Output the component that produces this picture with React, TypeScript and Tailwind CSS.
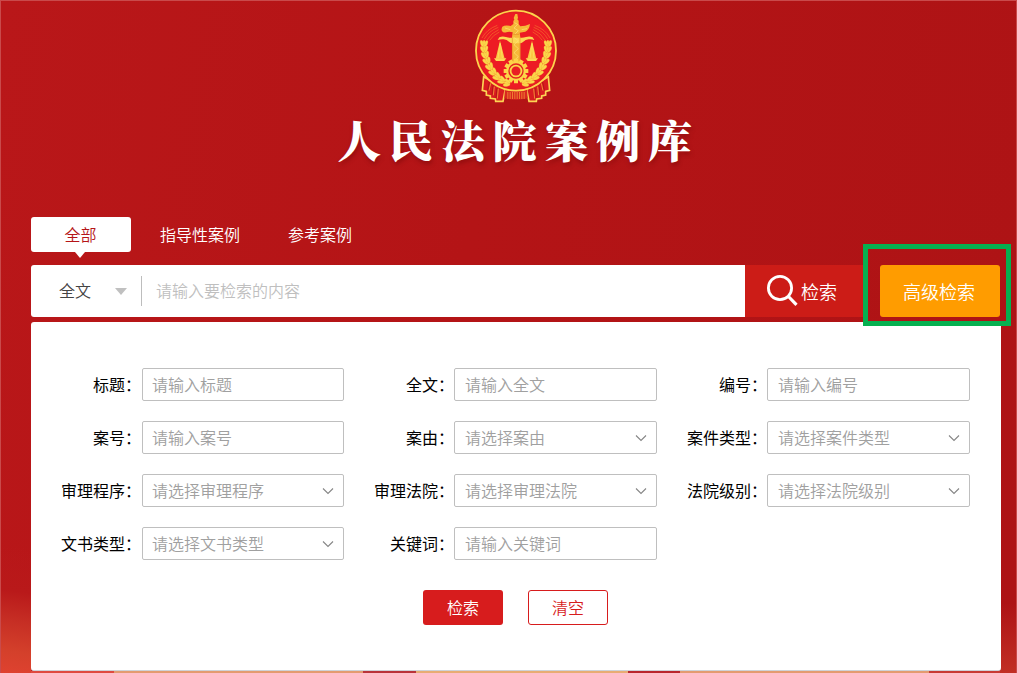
import clsx from 'clsx'

const tabs = ['全部', '指导性案例', '参考案例']

const fields = [
  { label: '标题', hint: '请输入标题' },
  { label: '全文', hint: '请输入全文' },
  { label: '编号', hint: '请输入编号' },
  { label: '案号', hint: '请输入案号' },
  { label: '案由', hint: '请选择案由', select: true },
  { label: '案件类型', hint: '请选择案件类型', select: true },
  { label: '审理程序', hint: '请选择审理程序', select: true },
  { label: '审理法院', hint: '请选择审理法院', select: true },
  { label: '法院级别', hint: '请选择法院级别', select: true },
  { label: '文书类型', hint: '请选择文书类型', select: true },
  { label: '关键词', hint: '请输入关键词' },
]

// Grain pairs along the left ear of wheat, bottom to top
const grains = [
  [126, 249, -76],
  [110, 241, -60],
  [96, 230, -50],
  [84, 216, -40],
  [74, 200, -30],
  [66, 183, -22],
  [61, 165, -14],
  [58, 148, -6],
  [57, 131, 2],
]

function Wheat() {
  return (
    <g fill="#fbd84c" stroke="#f2a52e" strokeWidth="0.8">
      {grains.map(([x, y, r]) => (
        <g key={y} transform={`translate(${x} ${y}) rotate(${r})`}>
          <ellipse cx="-5" cy="-2" rx="5" ry="10.5" transform="rotate(-22)" />
          <ellipse cx="5" cy="-2" rx="5" ry="10.5" transform="rotate(22)" />
          <ellipse cx="0" cy="-3" rx="3.5" ry="8" />
        </g>
      ))}
    </g>
  )
}

function Curtain() {
  return (
    <g>
      <path d="M56 230 L52 271 L64 274 L64 285 L76 288 L76 295 L91 297 L92 304 L114 304 L121 268 Z" fill="#d81c20" stroke="#fcd554" strokeWidth="5" />
      <path d="M73 246 L68 272 M84 256 L81 284 M96 264 L93 294" stroke="#a31114" strokeWidth="2" fill="none" />
      <path d="M77 250 L72 272 M88 260 L85 286 M100 266 L97 296" stroke="#f5a03a" strokeWidth="2.5" fill="none" />
    </g>
  )
}

function Emblem() {
  return (
    <svg className="h-[110px] w-[100px] shrink-0" viewBox="0 0 300 330">
      <Curtain />
      <g transform="translate(306 0) scale(-1 1)">
        <Curtain />
      </g>
      <path d="M120 262 H186 L188 295 Q153 303 118 295 Z" fill="#d9271f" />
      {[127, 134, 141, 148, 155, 162, 169, 176].map((x) => (
        <path key={x} d={`M${x + 1.5} 276 V297`} stroke="#f09035" strokeWidth="2.5" />
      ))}
      <circle cx="153" cy="152" r="120" fill="#ed1b24" stroke="#fcd44c" strokeWidth="5.5" />
      <circle cx="153" cy="152" r="114.5" fill="none" stroke="#d8221f" strokeWidth="2" />

      {/* Thin radiating arcs */}
      <g fill="none" stroke="#f5822b" strokeWidth="1.6">
        <path d="M51 114 Q65 88 97 76 M58 117 Q71 93 100 82 M66 120 Q78 99 101 89 M74 121 Q84 105 103 96" />
        <path d="M255 114 Q241 88 209 76 M248 117 Q235 93 206 82 M240 120 Q228 99 205 89 M232 121 Q222 105 203 96" />
      </g>

      <Wheat />
      <g transform="translate(306 0) scale(-1 1)">
        <Wheat />
      </g>

      {/* Huabiao column */}
      <path d="M151 42 L157 42 L159 54 L157 58 L161 62 V72 L166 79 Q181 79 195 72 Q193 89 181 95 L164 98 L166 112 V192 H141 V112 L143 97 Q132 94 124 97 Q114 99 111 93 Q108 88 112 80 Q120 74 137 78 L145 72 V63 L148 59 L146 54 Z" fill="#f6b838" />
      {/* Balance beam and pans */}
      <g fill="#fcd855">
        <path d="M103 112 Q112 107 123 111 Q132 114 141 113 H166 Q174 114 183 111 Q194 107 203 112 L208 120 Q199 117 191 118 Q181 119 175 125 Q171 129 166 130 H141 Q136 129 132 125 Q126 119 116 118 Q107 117 98 120 Z" />
        <path d="M105 122 L92 176 H119 Z M201 122 L187 176 H214 Z" fill="#fbc942" />
        <path d="M87 175 H124 L118 183 H93 Z M182 175 H219 L213 183 H188 Z" />
      </g>
      <path d="M105 130 L99 174 M106 130 L112 174 M201 130 L195 174 M201 130 L207 174" stroke="#fee46a" strokeWidth="2" />
      <path d="M146 112 L160 122 L147 134 L160 146 L147 158 L160 170 L147 182 M148 68 L158 73 L147 84 L160 92 L150 102 M120 84 L136 89 M170 89 L186 86" fill="none" stroke="#ffe27a" strokeWidth="2" />
      <path d="M142 113 V190 M165 113 V190 M145 103 H162" stroke="#dc7a23" strokeWidth="1.5" />

      {/* Gear */}
      <g fill="#fcd548">
        {[0, 30, 60, 90, 120, 150, 180, 210, 240, 270, 300, 330].map((a) => (
          <rect key={a} x="147" y="176" width="12" height="12" rx="1" transform={`rotate(${a} 153 213)`} />
        ))}
        <circle cx="153" cy="213" r="30" />
      </g>
      <circle cx="153" cy="213" r="21" fill="#fcd548" stroke="#e32320" strokeWidth="4" />
      <circle cx="153" cy="213" r="13.5" fill="#e91f24" />
    </svg>
  )
}

function Chevron() {
  return (
    <svg className="h-3 w-3" viewBox="0 0 12 12" fill="none" stroke="#858585" strokeWidth="1.1">
      <path d="M1 3.5 L6 8.5 L11 3.5" />
    </svg>
  )
}

export default function App() {
  return (
    <div className="relative flex h-[673px] w-[1017px] flex-col overflow-hidden border border-b-0 border-[#c94a4b] bg-[linear-gradient(100deg,#b91719_0%,#b41416_45%,#ad1315_100%)] font-['Noto_Sans_CJK_SC',sans-serif] text-base font-[350]">
      {/* Warm glow in the lower corners */}
      <div className="absolute bottom-0 left-0 h-[125px] w-[30px] bg-[linear-gradient(8deg,#df4230_0%,#d4402b_18%,#c62e24_42%,#b9191a_65%,transparent_100%)]" />
      <div className="absolute right-0 bottom-0 h-[70px] w-4 bg-linear-to-t from-[#c12f25] to-transparent" />

      {/* Header */}
      <header className="relative -mt-px flex h-[217px] flex-col items-center pl-[13px]">
        <Emblem />
        <h1 className="-mt-[3px] pl-[7px] font-['Noto_Serif_CJK_SC','Noto_Sans_CJK_SC',serif] text-[44px] leading-[64px] font-black tracking-[7.8px] whitespace-nowrap text-white [text-shadow:1px_3px_4px_rgba(90,0,0,0.35)]">
          人民法院案例库
        </h1>
      </header>

      {/* Tabs */}
      <nav className="relative ml-[30px] flex h-12 items-start text-white">
        {tabs.map((tab, i) => (
          <div
            key={tab}
            className={clsx(
              'relative flex h-[35px] items-center justify-center pb-0.5',
              i === 0 && 'w-[100px] rounded-[3px] bg-white pr-px text-[#b51518]',
              i === 1 && 'ml-[29px]',
              i === 2 && 'ml-12',
            )}
          >
            {tab}
            {i === 0 && (
              <span className="absolute top-[35px] left-[44px] border-x-[5px] border-t-[6px] border-x-transparent border-t-white" />
            )}
          </div>
        ))}
      </nav>

      {/* Search bar */}
      <div className="relative ml-[30px] flex h-[52px]">
        <div className="flex w-[714px] items-center rounded-l-[3px] bg-white">
          <span className="ml-7 pb-0.5 text-[#444]">全文</span>
          <span className="ml-6 border-x-[6px] border-t-[7px] border-x-transparent border-t-[#c0c0c0]" />
          <span className="ml-[14px] h-[30px] w-px bg-[#bdbdbd]" />
          <span className="ml-[14px] pb-0.5 text-[#bfbfbf]">请输入要检索的内容</span>
        </div>
        <div className="flex w-[120px] items-center bg-[#cc1c17] pl-5 text-lg text-white">
          <svg className="h-9 w-9" viewBox="0 0 36 36" fill="none" stroke="white" strokeWidth="2.8">
            <circle cx="15" cy="15" r="11.6" />
            <path d="M23.5 23.5 L31.5 31.8" strokeWidth="3.2" />
          </svg>
          <span>检索</span>
        </div>
        <div className="relative ml-[15px] flex w-[120px] items-center justify-center rounded-[3px] bg-[#ff9c00] pr-0.5 text-lg text-white">
          高级检索
          <span className="absolute -top-[21px] -left-[17px] z-10 h-[82px] w-[148px] border-[5px] border-[#06b050]" />
        </div>
      </div>

      {/* Advanced search panel */}
      <div className="relative mt-[5px] ml-[30px] h-[349px] w-[970px] rounded-[3px] border-b border-[#cfd3d8] bg-white pt-[46px]">
        <div className="grid grid-cols-[313px_313px_313px] gap-y-5">
          {fields.map((f, i) => (
            <div key={f.label} className="flex h-[33px] items-center">
              <span
                className={clsx(
                  'pb-0.5 text-right font-normal whitespace-nowrap text-black',
                  i % 3 === 0 ? 'w-[111px] pr-px' : 'w-[110px]',
                )}
              >
                {f.label}：
              </span>
              <div
                className={clsx(
                  'flex h-[33px] flex-1 items-center justify-between rounded-[2px] border border-[#bfbfbf] pr-[9px] text-[#a0a0a0]',
                  i % 3 === 0 ? 'pl-[9px]' : 'pl-[10px]',
                )}
              >
                <span className="pb-0.5">{f.hint}</span>
                {f.select && <Chevron />}
              </div>
            </div>
          ))}
        </div>
        <div className="mt-[30px] flex gap-[25px] pl-[392px]">
          <div className="flex h-[35px] w-20 items-center justify-center rounded-[3px] bg-[#d71c1d] pb-0.5 text-white">检索</div>
          <div className="flex h-[35px] w-20 items-center justify-center rounded-[3px] border border-[#d71c1d] pb-0.5 text-[#d71c1d]">清空</div>
        </div>
      </div>

      {/* Top edge of the building artwork */}
      <div className="flex h-0.5">
        <span className="w-[113px] bg-[#df4a40]" />
        <span className="w-[249px] bg-[#e39b70]" />
        <span className="w-[53px] bg-[#b9333a]" />
        <span className="w-[212px] bg-[#e8ac73]" />
        <span className="w-[52px] bg-[#b9262d]" />
        <span className="w-[249px] bg-[#e39b70]" />
        <span className="flex-1 bg-[#c83a34]" />
      </div>
    </div>
  )
}
